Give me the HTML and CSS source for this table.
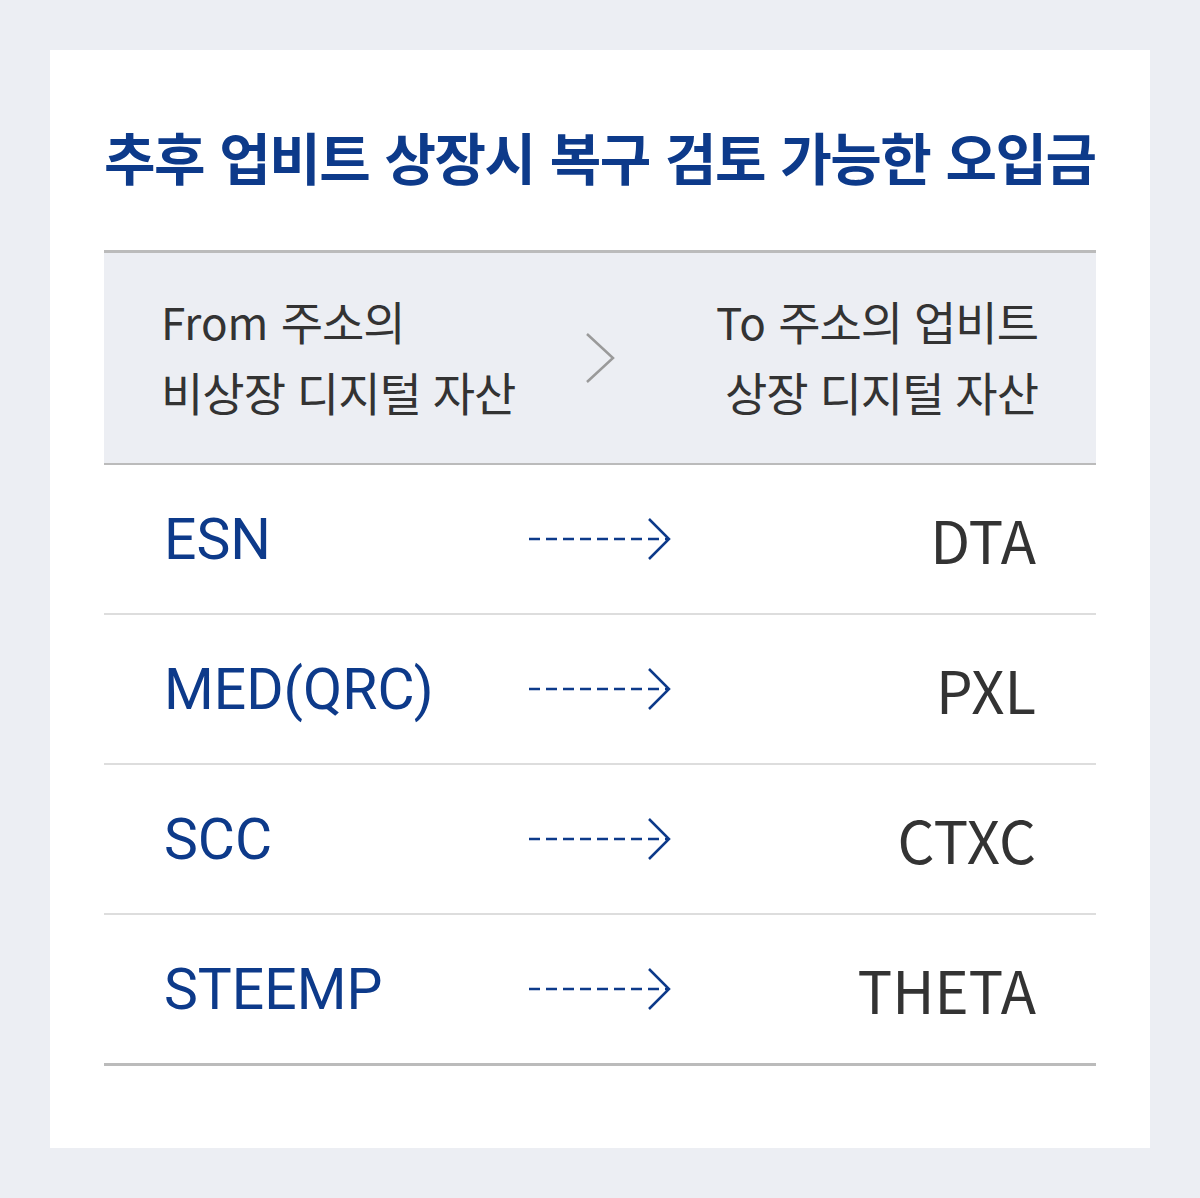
FILE: index.html
```html
<!DOCTYPE html>
<html lang="ko">
<head>
<meta charset="utf-8">
<title>추후 업비트 상장시 복구 검토 가능한 오입금</title>
<link rel="stylesheet" href="styles.css">
</head>
<body>
<div class="card">
  <h1 class="title">추후 업비트 상장시 복구 검토 가능한 오입금</h1>
  <div class="table">
    <div class="head">
      <div class="cell left">
        <div class="hline">From <span class="ko">주소의</span></div>
        <div class="hline"><span class="ko">비상장 디지털 자산</span></div>
      </div>
      <div class="cell mid">
        <svg class="chev" width="30" height="52" viewBox="0 0 30 52"><polyline points="2,2 28,26 2,50" fill="none" stroke="#9a9a9a" stroke-width="2.5"/></svg>
      </div>
      <div class="cell right">
        <div class="hline">To <span class="ko">주소의 업비트</span></div>
        <div class="hline"><span class="ko">상장 디지털 자산</span></div>
      </div>
    </div>
    <div class="row">
      <div class="cell left from">ESN</div>
      <div class="cell mid"><svg class="arrow" width="142" height="44" viewBox="0 0 142 44"><line x1="0" y1="22" x2="139" y2="22" stroke="#0d3a8a" stroke-width="2.5" stroke-dasharray="11 6"/><polyline points="120,2 140,22 120,42" fill="none" stroke="#0d3a8a" stroke-width="2.5"/></svg></div>
      <div class="cell right to">DTA</div>
    </div>
    <div class="row">
      <div class="cell left from">MED(QRC)</div>
      <div class="cell mid"><svg class="arrow" width="142" height="44" viewBox="0 0 142 44"><line x1="0" y1="22" x2="139" y2="22" stroke="#0d3a8a" stroke-width="2.5" stroke-dasharray="11 6"/><polyline points="120,2 140,22 120,42" fill="none" stroke="#0d3a8a" stroke-width="2.5"/></svg></div>
      <div class="cell right to">PXL</div>
    </div>
    <div class="row">
      <div class="cell left from">SCC</div>
      <div class="cell mid"><svg class="arrow" width="142" height="44" viewBox="0 0 142 44"><line x1="0" y1="22" x2="139" y2="22" stroke="#0d3a8a" stroke-width="2.5" stroke-dasharray="11 6"/><polyline points="120,2 140,22 120,42" fill="none" stroke="#0d3a8a" stroke-width="2.5"/></svg></div>
      <div class="cell right to">CTXC</div>
    </div>
    <div class="row last">
      <div class="cell left from">STEEMP</div>
      <div class="cell mid"><svg class="arrow" width="142" height="44" viewBox="0 0 142 44"><line x1="0" y1="22" x2="139" y2="22" stroke="#0d3a8a" stroke-width="2.5" stroke-dasharray="11 6"/><polyline points="120,2 140,22 120,42" fill="none" stroke="#0d3a8a" stroke-width="2.5"/></svg></div>
      <div class="cell right to">THETA</div>
    </div>
  </div>
</div>
</body>
</html>
```
FILE: styles.css
```css
html, body {
  margin: 0;
  padding: 0;
  background: #eceef3;
}
body {
  font-family: "Noto Sans CJK KR", "Noto Sans", sans-serif;
  color: #333333;
}
.card {
  margin: 50px;
  height: 1098px;
  box-sizing: border-box;
  background: #ffffff;
  padding: 72px 54px 0 54px;
}
.title {
  margin: 0 0 61px 0;
  font-size: 56px;
  line-height: 67px;
  font-weight: 700;
  color: #0d3a8a;
  letter-spacing: -1.5px;
  word-spacing: 1px;
  white-space: nowrap;
}
.table {
  border-top: 3px solid #bbbbbb;
  border-bottom: 3px solid #bbbbbb;
}
.head, .row {
  display: grid;
  grid-template-columns: 1fr 142px 1fr;
  align-items: center;
}
.head {
  height: 210px;
  background: #eceef3;
  border-bottom: 2px solid #bbbbbb;
  font-size: 44px;
  line-height: 70px;
  color: #333333;
}
.head .cell.left, .head .cell.right {
  padding-bottom: 4px;
}
.hline {
  white-space: nowrap;
}
.ko {
  font-size: 46px;
  letter-spacing: -1px;
  word-spacing: 0;
}
.cell.left {
  padding-left: 57px;
}
.row .cell.left {
  padding-left: 60px;
}
.cell.right {
  padding-right: 60px;
  text-align: right;
}
.head .cell.right {
  padding-right: 58px;
}
.head .hline.wide {
  word-spacing: 2px;
}
.cell.mid {
  display: flex;
  justify-content: center;
  align-items: center;
}
.row {
  height: 148px;
  border-bottom: 2px solid #dddddd;
  line-height: 1;
}
.row.last {
  border-bottom: none;
}
.from {
  font-family: Roboto, "Noto Sans CJK KR", sans-serif;
  font-size: 57px;
  color: #0d3a8a;
}
.to {
  font-family: "Noto Sans CJK KR", "Noto Sans", sans-serif;
  font-size: 58px;
  color: #333333;
}
.arrow, .chev {
  display: block;
}
```
